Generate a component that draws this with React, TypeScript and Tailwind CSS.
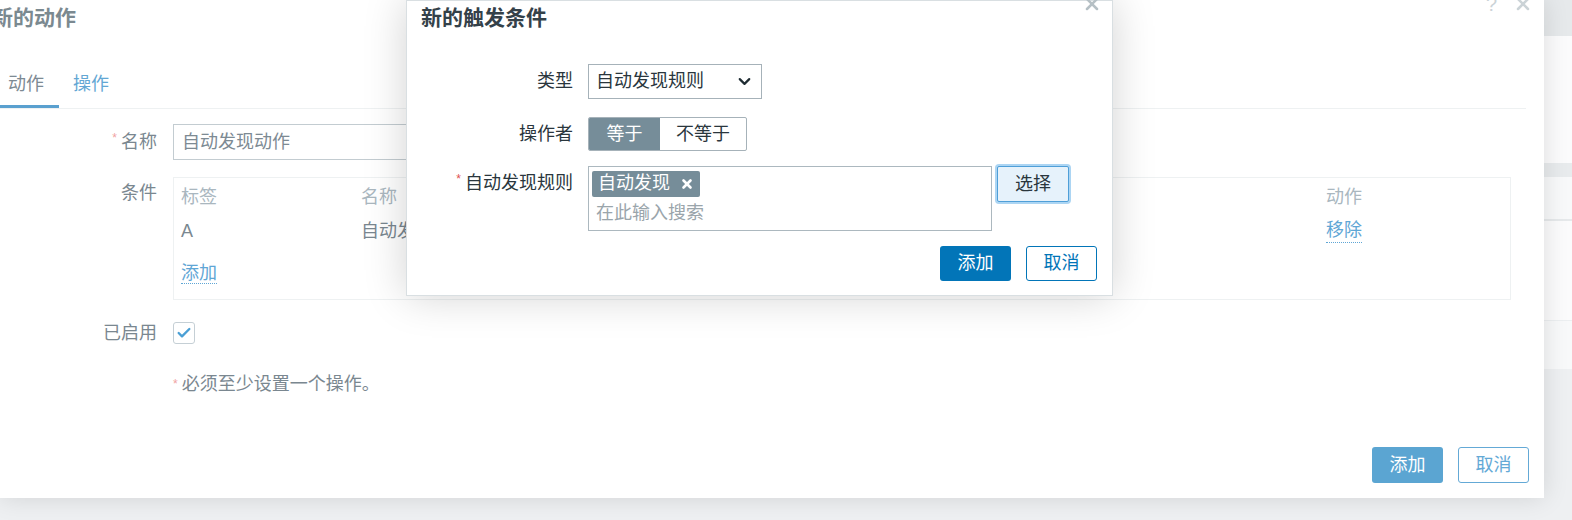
import { Check, ChevronDown, X } from "lucide-react";

const font = "font-['Liberation_Sans','Noto_Sans_CJK_SC',sans-serif]";

const Link = ({ children }: { children: string }) => (
  <span className="text-[#5fa6d5] border-b border-dotted border-[#5fa6d5] leading-[22px]">
    {children}
  </span>
);

const BackDialog = () => (
  <div className="absolute left-0 top-0 w-[1544px] h-[498px] bg-white shadow-[0_0_24px_rgba(0,0,0,0.12)] flex flex-col">
    <div className="flex items-start justify-between h-[60px]">
      <h1 className="ml-[-8px] mt-[6px] text-[21px] font-bold leading-[24px] text-[#7b8990]">新的动作</h1>
      <div className="flex items-center gap-[16px] mr-[11px] -mt-[6px] text-[#cbd3d7]">
        <span className="text-[20px] leading-none">?</span>
        <X size={20} strokeWidth={3} />
      </div>
    </div>
    <div className="flex mr-[18px] border-b border-[#eef1f2] h-[49px] text-[18px]">
      <div className="w-[59px] flex items-center pl-[8px] text-[#7d8a93] border-b-[3px] border-[#5aa0cf] pt-[4px]">
        动作
      </div>
      <div className="px-[14px] flex items-center text-[#63a7d4] pt-[1px]">操作</div>
    </div>

    <div className="grid grid-cols-[157px_1fr] gap-x-[16px] mt-[15px] mr-[33px] text-[18px] text-[#7a8790]">
      <div className="flex items-center justify-end h-[36px]">
        <span className="text-[#f0a2a2] text-[12px] mr-[4px] -mt-[8px]">*</span>名称
      </div>
      <div className="h-[36px] w-[400px] border border-[#c3ccd1] flex items-center px-[8px] text-[#7d8a93]">
        自动发现动作
      </div>

      <div className="mt-[17px] pt-[4px] text-right leading-[24px]">条件</div>
      <div className="mt-[17px] h-[123px] border border-[#eef1f2] px-[7px] pt-[7px]">
        <div className="flex leading-[24px] text-[#aab7bf]">
          <span className="w-[180px]">标签</span>
          <span className="w-[965px]">名称</span>
          <span>动作</span>
        </div>
        <div className="flex leading-[24px] mt-[10px]">
          <span className="w-[180px]">A</span>
          <span className="w-[965px]">自动发现规则 等于 自动发现</span>
          <Link>移除</Link>
        </div>
        <div className="mt-[17px]">
          <Link>添加</Link>
        </div>
      </div>

      <div className="mt-[21px] h-[24px] flex items-center justify-end">已启用</div>
      <div className="mt-[21px] h-[24px] flex items-center">
        <div className="w-[22px] h-[22px] rounded-[3px] border border-[#c5cfd5] flex items-center justify-center">
          <Check size={16} strokeWidth={3.5} color="#4a9fd5" />
        </div>
      </div>

      <div />
      <div className="mt-[27px] leading-[24px]">
        <span className="text-[#f0a2a2] text-[12px] mr-[4px] align-top">*</span>必须至少设置一个操作。
      </div>
    </div>

    <div className="mt-auto mb-[15px] mr-[15px] flex justify-end gap-[15px] text-[18px]">
      <button className="w-[71px] h-[36px] rounded-[3px] bg-[#5ba5d2] text-white">添加</button>
      <button className="w-[71px] h-[36px] rounded-[3px] border border-[#64a9d6] text-[#64a9d6] bg-white">取消</button>
    </div>
  </div>
);

const FrontDialog = () => (
  <div className="absolute left-[406px] top-0 w-[707px] h-[296px] bg-white border border-[#d9dfe2] shadow-[0_0_40px_rgba(0,0,0,0.18)] flex flex-col text-[18px] text-[#2a363d]">
    <div className="flex items-start justify-between h-[50px]">
      <h2 className="ml-[14px] mt-[5px] text-[21px] font-bold leading-[24px] text-[#344149]">新的触发条件</h2>
      <X size={20} strokeWidth={3} color="#b6c0c5" className="mr-[10px] -mt-[7px]" />
    </div>

    <div className="grid grid-cols-[166px_auto] gap-x-[15px] items-start">
      <div className="mt-[13px] h-[35px] flex items-center justify-end">类型</div>
      <div className="mt-[13px] w-[174px] h-[35px] border border-[#a6b2b9] flex items-center justify-between px-[7px]">
        <span>自动发现规则</span>
        <ChevronDown size={19} strokeWidth={2.75} color="#1f2c33" />
      </div>

      <div className="mt-[18px] h-[34px] flex items-center justify-end">操作者</div>
      <div className="mt-[18px] flex h-[34px] w-[159px] rounded-[2px] border border-[#a6b2b9] overflow-hidden">
        <span className="w-[71px] bg-[#768d99] text-white flex items-center justify-center">等于</span>
        <span className="flex-1 flex items-center justify-center">不等于</span>
      </div>

      <div className="mt-[15px] h-[34px] flex items-center justify-end">
        <span className="text-[#e05050] text-[12px] mr-[4px] -mt-[8px]">*</span>自动发现规则
      </div>
      <div className="mt-[15px] flex gap-[5px] items-start">
        <div className="w-[404px] h-[65px] border border-[#acb8bf] px-[3px] pt-[3px]">
          <div className="inline-flex items-center h-[26px] rounded-[2px] bg-[#768d99] text-white px-[6px] gap-[10px]">
            <span>自动发现</span>
            <X size={14} strokeWidth={4.5} />
          </div>
          <div className="px-[4px] mt-[4px] leading-[24px] text-[#9aa5ab]">在此输入搜索</div>
        </div>
        <button className="w-[72px] h-[36px] rounded-[2px] bg-[#e6f2fb] border border-[#4f9fd8] shadow-[0_0_0_2px_#acd5f3]">
          选择
        </button>
      </div>
    </div>

    <div className="mt-auto mb-[14px] mr-[15px] flex justify-end gap-[15px]">
      <button className="w-[71px] h-[35px] rounded-[3px] bg-[#0275b8] text-white">添加</button>
      <button className="w-[71px] h-[35px] rounded-[3px] border border-[#0275b8] text-[#0275b8] bg-white">取消</button>
    </div>
  </div>
);

export default function App() {
  return (
    <div className={`relative w-[1572px] h-[520px] overflow-hidden bg-[#eef0f2] ${font}`}>
      <div className="flex flex-col">
        <div className="h-[36px] bg-[#e6e9eb]" />
        <div className="h-[127px] bg-[#fbfbfc]" />
        <div className="h-[14px] bg-[#e8ebed]" />
        <div className="h-[44px] bg-[#f8f9fa] border-b-[2px] border-[#e6e9eb]" />
        <div className="h-[100px] bg-[#fbfbfc] border-b border-[#eceff1]" />
        <div className="h-[48px] bg-[#f8f9fa]" />
      </div>
      <BackDialog />
      <FrontDialog />
    </div>
  );
}
